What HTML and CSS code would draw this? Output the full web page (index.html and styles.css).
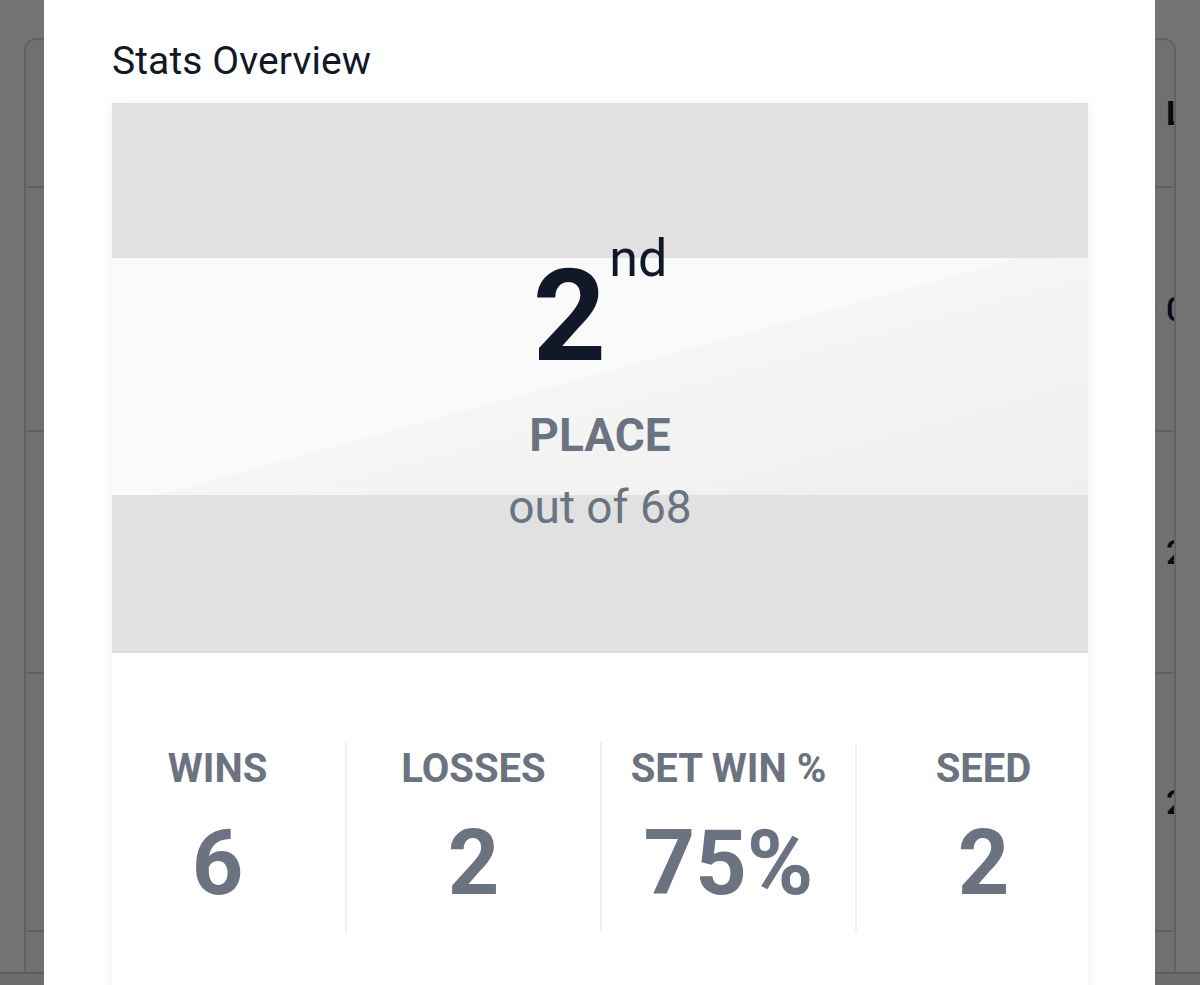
FILE: index.html
```html
<!DOCTYPE html>
<html lang="en">
<head>
<meta charset="utf-8">
<title>Stats Overview</title>
<link rel="stylesheet" href="styles.css">
</head>
<body>
  <div class="page">
    <div class="table">
      <div class="row row-head"><div class="cell-fill"></div><div class="cell-last head">Losses</div></div>
      <div class="row row-1"><div class="cell-fill"></div><div class="cell-last">0</div></div>
      <div class="row row-2"><div class="cell-fill"></div><div class="cell-last">2</div></div>
      <div class="row row-3"><div class="cell-fill"></div><div class="cell-last">2</div></div>
      <div class="row row-4"><div class="cell-fill"></div><div class="cell-last"></div></div>
    </div>
  </div>
  <div class="bottom-bar"></div>
  <div class="backdrop"></div>
  <div class="modal">
    <h2 class="title">Stats Overview</h2>
    <div class="card">
      <div class="hero">
        <div class="rank"><span class="rank-num">2</span><span class="rank-suffix">nd</span></div>
        <div class="place">PLACE</div>
        <div class="out-of">out of 68</div>
      </div>
      <div class="stats">
        <div class="stat"><div class="stat-label">WINS</div><div class="stat-value">6</div></div>
        <div class="stat"><div class="stat-label">LOSSES</div><div class="stat-value">2</div></div>
        <div class="stat"><div class="stat-label">SET WIN %</div><div class="stat-value">75%</div></div>
        <div class="stat"><div class="stat-label">SEED</div><div class="stat-value">2</div></div>
      </div>
    </div>
  </div>
</body>
</html>
```

FILE: styles.css
```css
* { box-sizing: border-box; }

html, body {
  margin: 0;
  height: 100%;
  overflow: hidden;
}

body {
  background: #ffffff;
  font-family: Roboto, "Liberation Sans", Arial, sans-serif;
}

.page {
  padding: 38px 24px 0;
}

.table {
  width: 1152px;
  border: 2px solid #d8d8d8;
  border-radius: 12px;
  background: #f8f8f9;
  overflow: hidden;
}

.row {
  display: flex;
  align-items: center;
  border-bottom: 2px solid #d8d8d8;
}

.row-head { height: 148px; }
.row-1 { height: 244px; }
.row-2 { height: 242px; }
.row-3 { height: 258px; }
.row-4 { height: 60px; border-bottom: none; }

.cell-fill { flex: 1; }

.cell-last {
  flex: 0 0 auto;
  width: 60px;
  margin-right: -52px;
  font-size: 34px;
  font-weight: 500;
  color: #111827;
}

.cell-last.head { font-weight: 700; }

.bottom-bar {
  position: fixed;
  left: 0;
  right: 0;
  bottom: 0;
  height: 13px;
  border-top: 2px solid #cfcfcf;
  background: #f3f1f1;
}

.backdrop {
  position: fixed;
  inset: 0;
  background: rgba(0, 0, 0, 0.55);
}

.modal {
  position: fixed;
  top: 0;
  bottom: 0;
  left: 44px;
  width: 1111px;
  background: #ffffff;
  padding: 42px 67px 0 68px;
}

.title {
  margin: 0 0 22px;
  font-size: 39px;
  line-height: 1;
  font-weight: 400;
  color: #111827;
  letter-spacing: 0.1px;
}

.card {
  background: #ffffff;
  box-shadow: 0 0 12px rgba(0, 0, 0, 0.07);
}

.hero {
  height: 550px;
  padding-top: 149px;
  display: flex;
  flex-direction: column;
  align-items: center;
  border-bottom: 2px solid #dcdce4;
  background-color: #e1e1e1;
  background-image: linear-gradient(344.6deg, #efefef 0%, #f3f3f3 35%, #f6f6f6 50.4%, #fafafa 50.9%, #fafafa 100%);
  background-size: 100% 237px;
  background-position: 0 155px;
  background-repeat: no-repeat;
}

.rank {
  display: flex;
  align-items: flex-start;
}

.rank-num {
  font-size: 128px;
  line-height: 1;
  font-weight: 700;
  color: #111827;
}

.rank-suffix {
  font-size: 52px;
  line-height: 1;
  font-weight: 400;
  color: #111827;
  margin-top: -19px;
  margin-left: 3px;
}

.place {
  margin-top: 32px;
  font-size: 46px;
  line-height: 1;
  font-weight: 700;
  color: #6b7280;
}

.out-of {
  margin-top: 26px;
  font-size: 46px;
  line-height: 1;
  font-weight: 400;
  color: #6b7280;
}

.stats {
  display: grid;
  grid-template-columns: repeat(4, 255px);
  margin: 0 -22px;
  padding: 89px 0 60px;
}

.stat {
  display: flex;
  flex-direction: column;
  align-items: center;
  padding: 7px 0 23px;
}

.stat + .stat {
  border-left: 2px solid #f0f0f0;
}

.stat-label {
  font-size: 40px;
  line-height: 1;
  font-weight: 700;
  color: #6b7280;
}

.stat-value {
  margin-top: 30px;
  font-size: 90px;
  line-height: 1;
  font-weight: 700;
  color: #6b7280;
}
```
